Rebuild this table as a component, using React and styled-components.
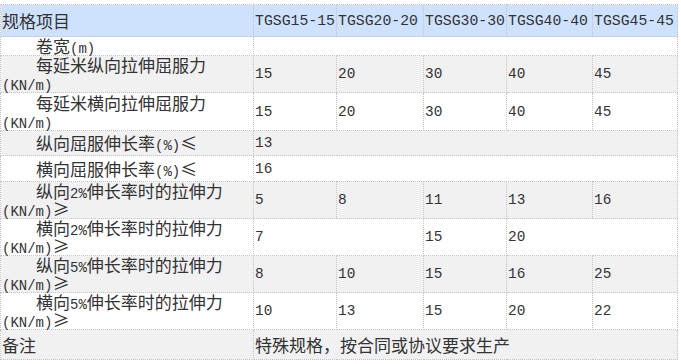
import React from 'react';
import styled, { createGlobalStyle } from 'styled-components';

const GlobalStyle = createGlobalStyle`
  body {
    margin: 0;
    background: #fff;
  }
`;

const widths = [253, 83, 87, 83, 86, 85];

const heads = ['TGSG15-15', 'TGSG20-20', 'TGSG30-30', 'TGSG40-40', 'TGSG45-45'];

const rows = [
  { h: 19, label: <>卷宽<Lat>(m)</Lat></>, indent: true, cells: [{ v: '', span: 5 }] },
  { h: 36, label: <>每延米纵向拉伸屈服力<br /><Lat>(KN/m)</Lat></>, indent: true, cells: ['15', '20', '30', '40', '45'] },
  { h: 38, label: <>每延米横向拉伸屈服力<br /><Lat>(KN/m)</Lat></>, indent: true, cells: ['15', '20', '30', '40', '45'] },
  { h: 25, label: <>纵向屈服伸长率<Lat>(%)</Lat>≤</>, indent: true, cells: [{ v: '13', span: 5 }] },
  { h: 26, label: <>横向屈服伸长率<Lat>(%)</Lat>≤</>, indent: true, cells: [{ v: '16', span: 5 }] },
  { h: 37, label: <>纵向<Lat>2%</Lat>伸长率时的拉伸力<br /><Lat>(KN/m)</Lat>≥</>, indent: true, cells: ['5', '8', '11', '13', '16'] },
  { h: 37, label: <>横向<Lat>2%</Lat>伸长率时的拉伸力<br /><Lat>(KN/m)</Lat>≥</>, indent: true, cells: [{ v: '7', span: 2 }, '15', { v: '20', span: 2 }] },
  { h: 35, label: <>纵向<Lat>5%</Lat>伸长率时的拉伸力<br /><Lat>(KN/m)</Lat>≥</>, indent: true, cells: ['8', '10', '15', '16', '25'] },
  { h: 37, label: <>横向<Lat>5%</Lat>伸长率时的拉伸力<br /><Lat>(KN/m)</Lat>≥</>, indent: true, cells: ['10', '13', '15', '20', '22'] },
];

function Lat({ children }) {
  return <LatSpan>{children}</LatSpan>;
}

function App() {
  return (
    <>
      <GlobalStyle />
      <Table>
        <colgroup>
          {widths.map((w, i) => <col key={i} style={{ width: w }} />)}
        </colgroup>
        <thead>
          <HeadRow>
            <HeadCell>规格项目</HeadCell>
            {heads.map((t) => <HeadCell key={t} $latin>{t}</HeadCell>)}
          </HeadRow>
        </thead>
        <tbody>
          {rows.map((r, i) => (
            <Row key={i} $h={r.h}>
              <Label $indent={r.indent}>{r.label}</Label>
              {r.cells.map((c, j) => {
                const cell = typeof c === 'string' ? { v: c, span: 1 } : c;
                return <Value key={j} colSpan={cell.span}>{cell.v}</Value>;
              })}
            </Row>
          ))}
          <Row $h={30}>
            <Label>备注</Label>
            <Note colSpan={5}>特殊规格，按合同或协议要求生产</Note>
          </Row>
        </tbody>
      </Table>
    </>
  );
}

export default App;

const Table = styled.table`
  margin-top: 4px;
  width: 677px;
  border-collapse: collapse;
  table-layout: fixed;
  font-family: "Noto Sans CJK SC", "DejaVu Sans", sans-serif;
  font-size: 17px;
  line-height: 18px;
  color: #333;

  td, th {
    border: 1px dotted #c4c4c4;
    padding: 0 1px;
    vertical-align: middle;
    text-align: left;
    font-weight: normal;
    overflow: visible;
    white-space: nowrap;
  }
`;

const HeadRow = styled.tr`
  height: 32px;
  background: #cfe2fd;
`;

const HeadCell = styled.th`
  font-family: ${(p) => (p.$latin ? '"Liberation Mono", monospace' : 'inherit')};
  font-size: ${(p) => (p.$latin ? '14.8px' : '17px')};
`;

const Row = styled.tr`
  height: ${(p) => p.$h}px;
  background: #fff;

  &:nth-child(even) {
    background: #f1f1f1;
  }
`;

const Label = styled.td`
  text-indent: ${(p) => (p.$indent ? '34px' : '0')};
  line-height: 18px;
`;

const LatSpan = styled.span`
  font-family: "Liberation Mono", monospace;
  font-size: 14px;
  line-height: 0;
`;

const Value = styled.td`
  font-family: "Liberation Mono", monospace;
  font-size: 14.4px;
  padding-left: 2px;
`;

const Note = styled.td`
  letter-spacing: 0;
`;
